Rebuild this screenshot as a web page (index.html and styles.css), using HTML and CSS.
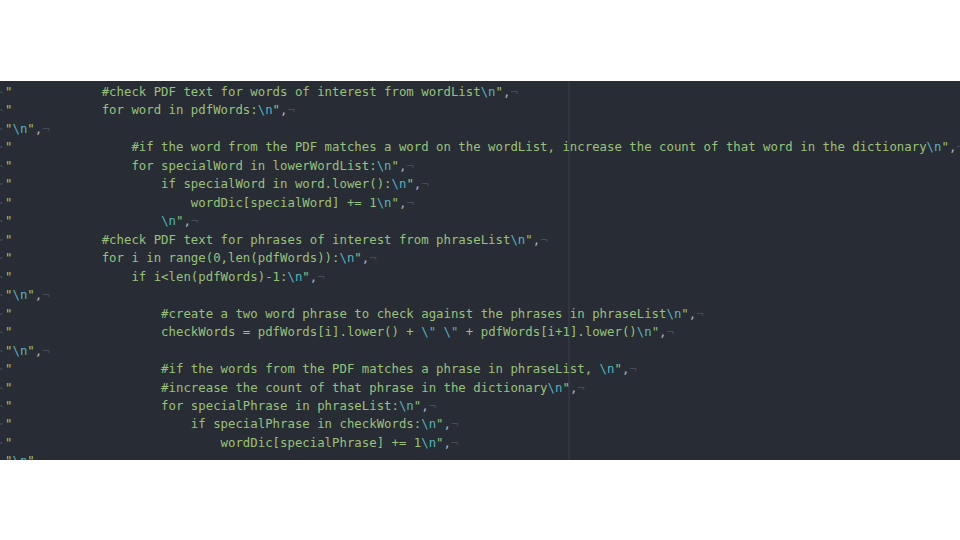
FILE: index.html
```html
<!DOCTYPE html>
<html>
<head>
<meta charset="utf-8">
<link rel="stylesheet" href="styles.css">
</head>
<body>
<div class="editor">
  <div class="guide"></div>
  <div class="lines">
    <div class="ln"><span class="i">·</span><span class="s">"            #check PDF text for words of interest from wordList</span><span class="e">\n</span><span class="s">"</span><span class="p">,</span><span class="i">¬</span></div>
    <div class="ln"><span class="i">·</span><span class="s">"            for word in pdfWords:</span><span class="e">\n</span><span class="s">"</span><span class="p">,</span><span class="i">¬</span></div>
    <div class="ln"><span class="i">·</span><span class="s">"</span><span class="e">\n</span><span class="s">"</span><span class="p">,</span><span class="i">¬</span></div>
    <div class="ln"><span class="i">·</span><span class="s">"                #if the word from the PDF matches a word on the wordList, increase the count of that word in the dictionary</span><span class="e">\n</span><span class="s">"</span><span class="p">,</span><span class="i">¬</span></div>
    <div class="ln"><span class="i">·</span><span class="s">"                for specialWord in lowerWordList:</span><span class="e">\n</span><span class="s">"</span><span class="p">,</span><span class="i">¬</span></div>
    <div class="ln"><span class="i">·</span><span class="s">"                    if specialWord in word.lower():</span><span class="e">\n</span><span class="s">"</span><span class="p">,</span><span class="i">¬</span></div>
    <div class="ln"><span class="i">·</span><span class="s">"                        wordDic[specialWord] += 1</span><span class="e">\n</span><span class="s">"</span><span class="p">,</span><span class="i">¬</span></div>
    <div class="ln"><span class="i">·</span><span class="s">"                    </span><span class="e">\n</span><span class="s">"</span><span class="p">,</span><span class="i">¬</span></div>
    <div class="ln"><span class="i">·</span><span class="s">"            #check PDF text for phrases of interest from phraseList</span><span class="e">\n</span><span class="s">"</span><span class="p">,</span><span class="i">¬</span></div>
    <div class="ln"><span class="i">·</span><span class="s">"            for i in range(0,len(pdfWords)):</span><span class="e">\n</span><span class="s">"</span><span class="p">,</span><span class="i">¬</span></div>
    <div class="ln"><span class="i">·</span><span class="s">"                if i&lt;len(pdfWords)-1:</span><span class="e">\n</span><span class="s">"</span><span class="p">,</span><span class="i">¬</span></div>
    <div class="ln"><span class="i">·</span><span class="s">"</span><span class="e">\n</span><span class="s">"</span><span class="p">,</span><span class="i">¬</span></div>
    <div class="ln"><span class="i">·</span><span class="s">"                    #create a two word phrase to check against the phrases in phraseList</span><span class="e">\n</span><span class="s">"</span><span class="p">,</span><span class="i">¬</span></div>
    <div class="ln"><span class="i">·</span><span class="s">"                    checkWords = pdfWords[i].lower() + </span><span class="e">\"</span><span class="s"> </span><span class="e">\"</span><span class="s"> + pdfWords[i+1].lower()</span><span class="e">\n</span><span class="s">"</span><span class="p">,</span><span class="i">¬</span></div>
    <div class="ln"><span class="i">·</span><span class="s">"</span><span class="e">\n</span><span class="s">"</span><span class="p">,</span><span class="i">¬</span></div>
    <div class="ln"><span class="i">·</span><span class="s">"                    #if the words from the PDF matches a phrase in phraseList, </span><span class="e">\n</span><span class="s">"</span><span class="p">,</span><span class="i">¬</span></div>
    <div class="ln"><span class="i">·</span><span class="s">"                    #increase the count of that phrase in the dictionary</span><span class="e">\n</span><span class="s">"</span><span class="p">,</span><span class="i">¬</span></div>
    <div class="ln"><span class="i">·</span><span class="s">"                    for specialPhrase in phraseList:</span><span class="e">\n</span><span class="s">"</span><span class="p">,</span><span class="i">¬</span></div>
    <div class="ln"><span class="i">·</span><span class="s">"                        if specialPhrase in checkWords:</span><span class="e">\n</span><span class="s">"</span><span class="p">,</span><span class="i">¬</span></div>
    <div class="ln"><span class="i">·</span><span class="s">"                            wordDic[specialPhrase] += 1</span><span class="e">\n</span><span class="s">"</span><span class="p">,</span><span class="i">¬</span></div>
    <div class="ln"><span class="i">·</span><span class="s">"</span><span class="e">\n</span><span class="s">"</span><span class="p">,</span><span class="i">¬</span></div>
  </div>
</div>
</body>
</html>
```
FILE: styles.css
```css
html, body {
  margin: 0;
  padding: 0;
  background: #ffffff;
}

body {
  width: 960px;
  height: 540px;
  overflow: hidden;
}

.editor {
  position: relative;
  margin-top: 81px;
  height: 379px;
  background: #282c34;
  overflow: hidden;
}

.guide {
  position: absolute;
  left: 568px;
  top: 0;
  bottom: 0;
  width: 2px;
  background: #30353e;
}

.lines {
  position: relative;
  margin-left: -2.4px;
  padding-top: 2px;
  font-family: "DejaVu Sans Mono", monospace;
  font-size: 12.35px;
  line-height: 18.47px;
}

.ln {
  height: 18.47px;
  white-space: pre;
}

.s {
  color: #98c27b;
}

.e {
  color: #52b4c0;
}

.p {
  color: #abb2bf;
}

.i {
  color: #454b57;
}
```
